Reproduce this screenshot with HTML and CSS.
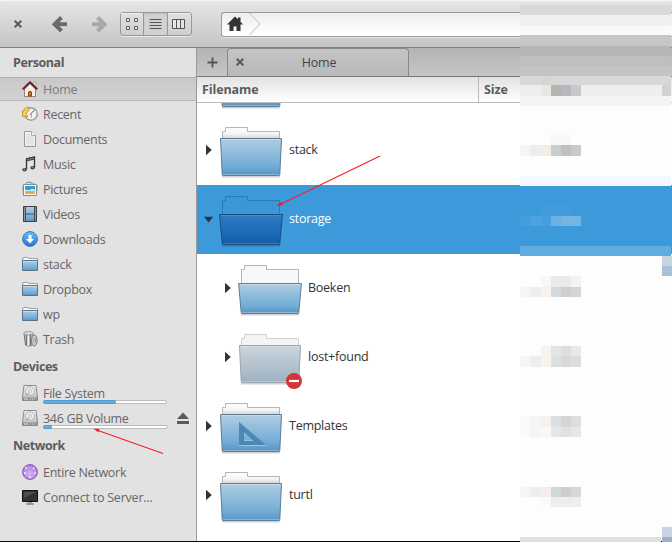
FILE: index.html
```html
<!DOCTYPE html>
<html lang="en">
<head>
<meta charset="utf-8">
<title>Home</title>
<link rel="stylesheet" href="styles.css">
</head>
<body>
<svg class="defs" width="0" height="0" aria-hidden="true">
  <defs>
    <linearGradient id="blue" x1="0" y1="0" x2="0" y2="1"><stop offset="0" stop-color="#b0cde3"/><stop offset=".75" stop-color="#72acd6"/><stop offset="1" stop-color="#5794c2"/></linearGradient>
    <linearGradient id="deep" x1="0" y1="0" x2="0" y2="1"><stop offset="0" stop-color="#2c7dc0"/><stop offset=".7" stop-color="#1b66b5"/><stop offset="1" stop-color="#165ba4"/></linearGradient>
    <linearGradient id="pale" x1="0" y1="0" x2="0" y2="1"><stop offset="0" stop-color="#ccd5dc"/><stop offset=".75" stop-color="#a9bbc9"/><stop offset="1" stop-color="#9bafbe"/></linearGradient>
    <linearGradient id="paper" x1="0" y1="0" x2="0" y2="1"><stop offset="0" stop-color="#fdfdfd"/><stop offset=".6" stop-color="#f5f5f5"/><stop offset="1" stop-color="#d8d8d8"/></linearGradient>
    <linearGradient id="metal" x1="0" y1="0" x2="0" y2="1"><stop offset="0" stop-color="#f3f3f3"/><stop offset="1" stop-color="#b5b5b5"/></linearGradient>
    <linearGradient id="dl" x1="0" y1="0" x2="0" y2="1"><stop offset="0" stop-color="#6cc0f3"/><stop offset="1" stop-color="#2b6fd0"/></linearGradient>
    <radialGradient id="globe" cx=".5" cy=".6" r=".6"><stop offset="0" stop-color="#d3b0f4"/><stop offset="1" stop-color="#9d6cd3"/></radialGradient>
    <symbol id="closed" viewBox="0 0 64 69">
      <path class="shade" d="M3 60.5h58"/>
      <path d="M3.5 22V15.5H6.5V11.5H28.5V15.5H60.5V22" fill="url(#paper)" stroke="#b5b5b5"/>
      <path d="M1.5 22.5H62.5L60.8 58.5Q60.8 59.5 60 59.5H4Q3.2 59.5 3.2 58.5Z" fill="url(#blue)" stroke="#5b7d97"/>
      <path d="M2.5 23.5H61.5M4 58.5H60" stroke="#fff" stroke-opacity=".3" fill="none"/>
    </symbol>
    <symbol id="open" viewBox="0 0 64 69">
      <path class="shade" d="M3 60.5h58"/>
      <path d="M3.5 30V15.5H6.5V11.5H28.5V15.5H60.5V30" fill="#f8f8f8" stroke="#b5b5b5"/>
      <path d="M.6 29.5H63.4L60.8 58.5Q60.8 59.5 60 59.5H4Q3.2 59.5 3.2 58.5Z" fill="url(#blue)" stroke="#5b7d97"/>
      <path d="M2 30.5H62M4 58.5H60" stroke="#fff" stroke-opacity=".3" fill="none"/>
    </symbol>
    <symbol id="smallfolder" viewBox="0 0 16 16">
      <path d="M.5 5V2.5H1.5V1.5H6.5V2.5H15.5V5" fill="#fafafa" stroke="#a2a2a2"/>
      <path d="M.5 4.5H15.5V14.5H.5Z" fill="url(#blue)" stroke="#58738a"/>
      <path d="M1 5.5H15" stroke="#d3e5f2" stroke-opacity=".7"/>
    </symbol>
    <symbol id="disk" viewBox="0 0 16 16">
      <path d="M2 .5H14L15.5 12V15.5H.5V12Z" fill="url(#metal)" stroke="#8b8b8b"/>
      <path d="M1 12.5H15V15H1Z" fill="#8d8d8d"/>
      <path d="M2 14H6M8 14H9M10 14H11M12 14H13" stroke="#e4e4e4"/>
      <ellipse cx="8" cy="6" rx="4.7" ry="4.2" fill="#e8e8e8" stroke="#b4b4b4"/>
      <circle cx="8" cy="6" r="1.4" fill="#fff" stroke="#aaa" stroke-width=".7"/><path d="M4 10.5L7 8" stroke="#999"/>
    </symbol>
    <symbol id="right" viewBox="0 0 10 12"><path d="M2 .7V11.3L7.8 6Z" fill="#333"/></symbol>
    <symbol id="down" viewBox="0 0 10 12"><path d="M0 3.7H9.2L4.6 9.5Z" fill="#333"/></symbol>
    <symbol id="cross" viewBox="0 0 8 8"><path d="M.7 .7L7.3 7.3M7.3 .7L.7 7.3" stroke="#5c5c5c" stroke-width="2.1" fill="none"/></symbol>
  </defs>
</svg>
<div class="window">
  <header class="toolbar">
    <svg class="close" width="8" height="8"><use href="#cross"/></svg>
    <svg class="back" width="16" height="17" viewBox="0 0 16 17"><path d="M9.5 1.5L2.5 8.3L9.5 15M3 8.3H15" stroke="#fff" stroke-opacity=".4" stroke-width="4" fill="none" transform="translate(0 1)"/><path d="M9.5 1.5L2.5 8.3L9.5 15M3 8.3H15" stroke="#6b6b6b" stroke-width="4" fill="none"/></svg>
    <svg class="forward" width="16" height="17" viewBox="0 0 16 17"><path d="M6.5 1.5L13.5 8.3L6.5 15M13 8.3H1" stroke="#a8a8a8" stroke-width="4" fill="none"/></svg>
    <div class="views">
      <span class="view"><svg width="14" height="14" viewBox="0 0 14 14"><path d="M1.5 1.5h3v3h-3zM9.5 1.5h3v3h-3zM1.5 9.5h3v3h-3zM9.5 9.5h3v3h-3z" fill="#eee" stroke="#5b5b5b"/></svg></span>
      <span class="view view-on"><svg width="13" height="12" viewBox="0 0 13 12"><path d="M.5 1.5H12.5M.5 4.5H12.5M.5 7.5H12.5M.5 10.5H12.5" stroke="#555"/></svg></span>
      <span class="view"><svg width="14" height="12" viewBox="0 0 14 12"><path d="M.5 1.5H12.5V10.5H.5ZM4.5 1V11M8.5 1V11" fill="#e5e5e5" stroke="#555"/></svg></span>
    </div>
    <div class="pathbar">
      <svg width="16" height="16" viewBox="0 0 16 16"><path d="M8 .5L0 8.5H2.5V15H6.5V10.5H9.5V15H13.5V8.5H16L13.5 5.8V1.5H11V3.3Z" fill="#333"/></svg>
      <svg class="chevron" width="12" height="22" viewBox="0 0 12 22"><path d="M.5 0L11 11L.5 22" fill="none" stroke="#bcbcbc"/></svg>
    </div>
  </header>
  <div class="body">
    <nav class="sidebar">
      <h2>Personal</h2>
      <div class="place current"><svg class="ico" viewBox="0 0 16 16"><path d="M11.5 1H14V5H11.5Z" fill="#f3d9c4" stroke="#b99b86" stroke-width=".7"/><path d="M2.5 8L8 2.5L13.5 8V15.5H2.5Z" fill="#f7eee8" stroke="#a08070"/><path d="M.8 8.2L8 1.3L15.2 8.2" fill="none" stroke="#6b1f22" stroke-width="2"/><path d="M6.5 15V11Q8 9.5 9.5 11V15Z" fill="#c87830" stroke="#7f4313"/></svg><span>Home</span></div>
      <div class="place"><svg class="ico" viewBox="0 0 16 16"><circle cx="9" cy="8" r="6.2" fill="#f3f3f1" stroke="#8e8e8a" stroke-width="1.2"/><path d="M9 7.5L12.5 4M9 7.5V9" stroke="#555"/><path d="M8.5 8L10 12" stroke="#ef7965"/><path d="M6.5 1Q2 1.5 2 5L.5 4.5V10.5H6L4.5 8.5Q4 5.5 7 4.5Z" fill="#f3cf58" stroke="#bb943c" stroke-width=".9"/></svg><span>Recent</span></div>
      <div class="place"><svg class="ico" viewBox="0 0 16 16"><path d="M2.5 .5H9.5L13.5 4.5V15.5H2.5Z" fill="url(#metal)" stroke="#999"/><path d="M3.5 1.5H9V5H12.5V14.5H3.5Z" fill="#e4e4e4" stroke="#fff" stroke-opacity=".7"/><path d="M9.5 .5V4.5H13.5" fill="#fff" stroke="#aaa"/></svg><span>Documents</span></div>
      <div class="place"><svg class="ico" viewBox="0 0 16 16"><path d="M4.5 13.5V3L12.5 1V11.5" fill="none" stroke="#333" stroke-width="1.3"/><path d="M4 2.3L13 .3V3.5L4 5.5Z" fill="#3c3c3c"/><path d="M5 3.8L12 2.2" stroke="#aaa" stroke-width=".6"/><ellipse cx="2.6" cy="13.8" rx="2.3" ry="1.8" fill="#444"/><ellipse cx="10.6" cy="11.8" rx="2.3" ry="1.8" fill="#444"/><circle cx="2.4" cy="13.6" r=".7" fill="#aaa"/><circle cx="10.4" cy="11.6" r=".7" fill="#aaa"/></svg><span>Music</span></div>
      <div class="place"><svg class="ico" viewBox="0 0 16 16"><path d="M3 3L7 .7L14 3.5L15.5 5L14.5 12L1.5 14L.5 6Z" fill="#ddd" stroke="#999" stroke-width=".8"/><path d="M4 2L7 1L10 3" fill="none" stroke="#65b1ce"/><path d="M1.5 3.5H14.5V14.5H1.5Z" fill="#fff" stroke="#8a8a8a"/><path d="M3 5H13V9H3Z" fill="#279fd9"/><path d="M3 9H13V13H3Z" fill="#e8aa49"/><path d="M3 8.5L7 9.2L10 7.8L13 8.5V10H3Z" fill="#c9edf5"/></svg><span>Pictures</span></div>
      <div class="place"><svg class="ico" viewBox="0 0 16 16"><path d="M1.5 .5H14.5V15.5H1.5Z" fill="#444b50" stroke="#3c4246"/><path d="M4 1H12V7.5H4ZM4 8.5H12V15H4Z" fill="url(#blue)"/><path d="M2.5 1.5V15M13.5 1.5V15" stroke="#e8e8e8" stroke-width="1" stroke-dasharray="1 1"/></svg><span>Videos</span></div>
      <div class="place"><svg class="ico" viewBox="0 0 16 16"><circle cx="8" cy="8" r="7.4" fill="url(#dl)" stroke="#3579bc"/><path d="M6.5 4H9.5V8H12L8 12.5L4 8H6.5Z" fill="#fff"/></svg><span>Downloads</span></div>
      <div class="place"><svg class="ico"><use href="#smallfolder"/></svg><span>stack</span></div>
      <div class="place"><svg class="ico"><use href="#smallfolder"/></svg><span>Dropbox</span></div>
      <div class="place"><svg class="ico"><use href="#smallfolder"/></svg><span>wp</span></div>
      <div class="place"><svg class="ico" viewBox="0 0 16 16"><path d="M2 2.5H11L10.3 14Q7 16.3 3.5 14Z" fill="#b8b8b8" stroke="#777"/><path d="M4.5 4V14M8.5 4V14.5" stroke="#777"/><path d="M6.3 4V15" stroke="#f4f4f4" stroke-width="1.4"/><ellipse cx="6.5" cy="2.3" rx="4.7" ry="1.7" fill="#ddd" stroke="#8b8b8b" stroke-width=".8"/><ellipse cx="12.3" cy="9.5" rx="2.8" ry="5.5" fill="#ccc" stroke="#777"/><ellipse cx="12.7" cy="9.3" rx="1" ry="2" fill="#eee" stroke="#777" stroke-width=".8"/></svg><span>Trash</span></div>
      <h2 class="devices">Devices</h2>
      <div class="place device"><svg class="ico"><use href="#disk"/></svg><div class="volume"><span>File System</span><div class="meter"><i style="width:60%"></i></div></div></div>
      <div class="place device"><svg class="ico"><use href="#disk"/></svg><div class="volume wide"><span>346 GB Volume</span><div class="meter"><i style="width:7%"></i></div></div><svg class="eject" width="12" height="13" viewBox="0 0 12 13"><path d="M6 .5L12 7H0ZM0 9H12V12H0Z" fill="#5a5a5a"/></svg></div>
      <h2 class="network">Network</h2>
      <div class="place"><svg class="ico" viewBox="0 0 16 16"><circle cx="8" cy="8" r="7.5" fill="url(#globe)" stroke="#9068bb"/><path d="M4 3L12 4L14 9L9 14L3 10ZM4 3L8 8L12 4M3 10L13 9" fill="none" stroke="#e0c8fa" stroke-width=".5"/><g fill="#fff"><circle cx="4" cy="4" r=".8"/><circle cx="12" cy="4" r=".8"/><circle cx="3" cy="9" r=".9"/><circle cx="13" cy="9" r=".8"/><circle cx="8" cy="13" r=".9"/></g></svg><span>Entire Network</span></div>
      <div class="place connect"><svg class="ico" viewBox="0 0 16 16"><path d="M.5 1.5H15.5V12.5H.5Z" fill="#343039" stroke="#111"/><path d="M2 3H14L2 9Z" fill="#514b57"/><path d="M6 13H10V14H6Z" fill="#999"/><path d="M4.5 14.5H11.5V15.5H4.5Z" fill="#fff" stroke="#777" stroke-width=".7"/></svg><span>Connect to Server...</span></div>
    </nav>
    <main class="content">
      <div class="tabs">
        <div class="newtab"><svg width="11" height="11" viewBox="0 0 11 11"><path d="M5.5 .5V10.5M.5 5.5H10.5" stroke="#555" stroke-width="1.8"/></svg></div>
        <div class="tab"><svg width="8" height="8"><use href="#cross"/></svg><span>Home</span></div>
      </div>
      <div class="columns"><span class="name">Filename</span><span class="size">Size</span></div>
      <div class="files">
        <div class="file partial"><svg class="folder"><use href="#closed"/></svg></div>
        <div class="file"><svg class="arrow"><use href="#right"/></svg><svg class="folder"><use href="#closed"/></svg><span>stack</span></div>
        <div class="file selected"><svg class="arrow"><use href="#down"/></svg><svg class="folder" viewBox="0 0 64 69"><path class="shade" d="M3 60.5h58"/><path d="M3.5 29V15.5H6.5V11.5H28.5V15.5H60.5V29" fill="#3c97d7" stroke="#2b7ab5"/><path d="M.6 29.5H63.4L60.8 58.5Q60.8 59.5 60 59.5H4Q3.2 59.5 3.2 58.5Z" fill="url(#deep)" stroke="#1a4d7f"/><path d="M2 30.5H62M4 58.5H60" stroke="#579ed5" stroke-opacity=".5" fill="none"/></svg><span>storage</span></div>
        <div class="file child"><svg class="arrow"><use href="#right"/></svg><svg class="folder"><use href="#open"/></svg><span>Boeken</span></div>
        <div class="file child"><svg class="arrow"><use href="#right"/></svg><svg class="folder" viewBox="0 0 64 69"><path class="shade" d="M3 60.5h58"/><path d="M3.5 22V15.5H6.5V11.5H28.5V15.5H60.5V22" fill="#f4f4f4" stroke="#d0d0d0"/><path d="M1.5 22.5H62.5L60.8 58.5Q60.8 59.5 60 59.5H4Q3.2 59.5 3.2 58.5Z" fill="url(#pale)" stroke="#9aa5ad"/><path d="M2.5 23.5H61.5M4 58.5H60" stroke="#fff" stroke-opacity=".3"/><circle cx="56" cy="58" r="8" fill="#d33438"/><path d="M51 58H61" stroke="#fff" stroke-width="2.2"/></svg><span>lost+found</span></div>
        <div class="file"><svg class="arrow"><use href="#right"/></svg><svg class="folder" viewBox="0 0 64 69"><use href="#closed" width="64" height="69"/><path d="M20 30V53H47ZM25 40V48.5H34Z" fill="#4e87b1" fill-rule="evenodd"/><path d="M20 53.5H47M25 48.5H34" stroke="#a7cce5" stroke-width=".8"/></svg><span>Templates</span></div>
        <div class="file"><svg class="arrow"><use href="#right"/></svg><svg class="folder"><use href="#closed"/></svg><span>turtl</span></div>
      </div>
    </main>
  </div>
</div>
<svg class="overlay" width="672" height="542" viewBox="0 0 672 542">
  <g shape-rendering="crispEdges">
    <path d="M520 5h151v10h-151z" fill="#d8d8d8"/><path d="M520 15h151v11h-151z" fill="#f0f0f0"/><path d="M520 26h151v9h-151z" fill="#f9f9f9"/>
    <path d="M520 35h151v11h-151z" fill="#c7c7c7"/><path d="M520 46h151v10h-151z" fill="#b5b5b5"/><path d="M520 56h151v10h-151z" fill="#bfbfbf"/><path d="M520 66h151v10h-151z" fill="#c4c4c4"/>
    <path d="M520 76h151v9h-151z" fill="#d8d8d8"/><path d="M520 85h151v11h-151z" fill="#eee"/><path d="M520 96h151v10h-151z" fill="#f4f4f4"/>
    <path d="M520 106h151v70h-151z" fill="#fdfdfd"/><path d="M520 176h151v10h-151z" fill="#f2f8fd"/><path d="M520 186h151v60h-151z" fill="#3c99da"/><path d="M520 246h151v10h-151z" fill="#60acdf"/>
    <path d="M520 256h151v281h-151z" fill="#fdfdfd"/><path d="M520 537h141v5h-141z" fill="#e0e0e0"/>
    <path d="M541 76h10v9h-10z" fill="#d5d5d2"/><path d="M541 85h10v11h-10z" fill="#e8e7e3"/><path d="M551 85h10v11h-10z" fill="#b4b4b0"/><path d="M561 85h10v11h-10z" fill="#b7b9be"/><path d="M571 85h10v11h-10z" fill="#c7c8ca"/><path d="M662 85h9v11h-9z" fill="#d2d2d2"/>
    <path d="M551 135h20v10h-20z" fill="#f8f8f8"/><path d="M520 145h10v11h-10z" fill="#f5f5f5"/><path d="M530 145h11v11h-11z" fill="#ededed"/><path d="M541 145h10v11h-10z" fill="#f3ece7"/><path d="M551 145h10v11h-10z" fill="#cacdcc"/><path d="M561 145h10v11h-10z" fill="#c0c0bf"/><path d="M571 145h10v11h-10z" fill="#c9cacc"/>
    <path d="M541 206h30v10h-30z" fill="#429cdc"/><path d="M520 216h11v10h-11z" fill="#469ddd"/><path d="M531 216h10v10h-10z" fill="#4da2df"/><path d="M541 216h10v10h-10z" fill="#43a0e1"/><path d="M551 216h10v10h-10z" fill="#6cb0e2"/><path d="M561 216h20v10h-20z" fill="#75b5e4"/>
    <path d="M541 276h10v11h-10z" fill="#f9f7f5"/><path d="M551 276h20v11h-20z" fill="#e9ebeb"/><path d="M571 276h10v11h-10z" fill="#f3f3f3"/><path d="M520 287h10v10h-10z" fill="#f5f5f5"/><path d="M530 287h11v10h-11z" fill="#eee"/><path d="M541 287h10v10h-10z" fill="#f8f2ee"/><path d="M551 287h10v10h-10z" fill="#d5d9d9"/><path d="M561 287h10v10h-10z" fill="#cecfcd"/><path d="M571 287h10v10h-10z" fill="#d3d4d8"/>
    <path d="M541 346h10v21h-10z" fill="#f9f3f0"/><path d="M551 346h10v10h-10z" fill="#e2e4e6"/><path d="M561 346h10v10h-10z" fill="#dddee2"/><path d="M571 346h10v10h-10z" fill="#e9e9e9"/><path d="M520 356h10v11h-10z" fill="#f6f6f6"/><path d="M530 356h11v11h-11z" fill="#eee"/><path d="M551 356h10v11h-10z" fill="#dde0df"/><path d="M561 356h10v11h-10z" fill="#d8d8d8"/><path d="M571 356h10v11h-10z" fill="#dcdde0"/>
    <path d="M520 416h10v21h-10z" fill="#fafafa"/><path d="M530 416h11v21h-11z" fill="#f5f5f7"/><path d="M541 416h10v11h-10z" fill="#f7f1ee"/><path d="M551 416h10v11h-10z" fill="#dcdee0"/><path d="M561 416h10v11h-10z" fill="#d5d5d5"/><path d="M571 416h10v11h-10z" fill="#dedee0"/><path d="M541 427h10v10h-10z" fill="#f9f8f5"/><path d="M551 427h10v10h-10z" fill="#e4e7e5"/><path d="M561 427h10v10h-10z" fill="#e1e1e2"/><path d="M571 427h10v10h-10z" fill="#e5e7ea"/>
    <path d="M520 487h10v10h-10z" fill="#f5f5f5"/><path d="M530 487h11v10h-11z" fill="#ededee"/><path d="M541 487h10v10h-10z" fill="#f5eeeb"/><path d="M551 487h10v10h-10z" fill="#d1d6d6"/><path d="M561 487h10v10h-10z" fill="#cccfcd"/><path d="M571 487h10v10h-10z" fill="#d6d7da"/><path d="M541 497h10v10h-10z" fill="#fafaf8"/><path d="M551 497h20v10h-20z" fill="#ebeeed"/><path d="M571 497h10v10h-10z" fill="#eee"/>
    <path d="M662 256h10v10h-10zM662 527h10v10h-10z" fill="#c9d3df"/><path d="M662 266h10v10h-10z" fill="#aac0d9"/><path d="M662 537h10v5h-10z" fill="#9bb1cf"/>
  </g>
  <path d="M380 156L282 203.5M163 453.5L98 430.5" stroke="#f51f25" stroke-width="1.1"/>
  <path d="M276.5 206L281 201.8L282.8 205ZM93.5 428.7L99.5 429L98.3 432.3Z" fill="#ed1c24"/>
</svg>
</body>
</html>
```
FILE: styles.css
```css
* { box-sizing: border-box; }
body { margin: 0; font: 12.5px/18px "Open Sans", "Noto Sans", sans-serif; letter-spacing: -.25px; color: #333; overflow: hidden; }
svg { display: block; flex: none; }
.defs { position: absolute; }
.window { width: 672px; height: 542px; display: flex; flex-direction: column; border-bottom: 1px solid #080808; background: #fff; }
.toolbar { height: 48px; flex: none; display: flex; align-items: center; padding-left: 14px; background: linear-gradient(#e6e6e6, #c5c5c5); border-top: 1px solid #f5f5f5; border-bottom: 1px solid #828282; border-top-left-radius: 2px; }
.back { margin-left: 30px; }
.forward { margin-left: 23px; }
.views { display: flex; width: 72px; height: 24px; margin-left: 13px; border: 1px solid #999; border-radius: 3px; background: linear-gradient(#e1e1e1, #cecece); box-shadow: 0 1px #e8e8e8; }
.view { width: 22px; flex: none; display: flex; align-items: center; justify-content: center; box-shadow: inset 0 1px #eee; }
.view-on { width: 25px; background: #d2d2d2; border: solid #999; border-width: 0 1px; box-shadow: inset 0 1px 2px #bbb; }
.pathbar { flex: 1; height: 25px; margin-left: 29px; padding-left: 5px; display: flex; align-items: center; border: 1px solid #999; border-right: 0; border-radius: 3px 0 0 3px; background: linear-gradient(#eee, #fff); box-shadow: 0 1px #e4e4e4; }
.chevron { margin-left: 6px; }
.body { flex: 1; min-height: 0; display: flex; }
.sidebar { width: 197px; flex: none; background: #e2e2e2; border-right: 1px solid #999; color: #666; }
h2 { margin: 0; height: 29px; padding-left: 13px; font-size: 12.5px; line-height: 29px; font-weight: 700; letter-spacing: -.42px; color: #5c5c5c; }
.place { height: 25px; padding: 4px 0 0 22px; display: flex; gap: 5px; letter-spacing: -.3px; }
.connect { letter-spacing: -.22px; }
.place > span { line-height: 17px; }
.current { height: 24px; margin-bottom: 1px; padding-top: 3px; border-top: 1px solid #b0b0b0; border-bottom: 1px solid #b8b8b8; background: linear-gradient(#c9c9c9, #d1d1d1); color: #7c7c7c; }
.ico { width: 16px; height: 16px; }
.volume { width: 124px; display: flex; flex-direction: column; }
.volume > span { height: 15px; line-height: 17px; }
.wide { width: 125px; }
.meter { height: 4px; border: 1px solid #bcbcbc; border-radius: 2px; background: #fff; }
.meter i { display: block; height: 4px; margin: -1px; border-radius: 2px; background: #62aee3; border: 1px solid #5399cb; }
.eject { margin: 2px 0 0 4px; }
.content { flex: 1; min-width: 0; display: flex; flex-direction: column; }
.tabs { height: 29px; flex: none; display: flex; background: linear-gradient(#b4b4b4, #c5c5c5); border-bottom: 1px solid #777; }
.newtab { width: 30px; display: flex; align-items: center; justify-content: center; }
.tab { width: 182px; padding: 0 0 1px 8px; display: flex; align-items: center; border: 1px solid #888; border-bottom: 0; border-radius: 4px 4px 0 0; background: linear-gradient(#c4c4c4, #b9b9b9); }
.tab span { flex: 1; padding: 1px 14px 0 0; text-align: center; color: #444; }
.columns { height: 26px; flex: none; display: flex; line-height: 25px; font-weight: 700; letter-spacing: -.1px; color: #5c5c5c; background: linear-gradient(#e2e2e2, #fff); border-bottom: 1px solid #bcbcbc; }
.name { width: 282px; padding-left: 5px; border-right: 1px solid #bcbcbc; }
.size { padding-left: 5px; }
.files { flex: 1; min-height: 0; display: flex; flex-direction: column; overflow: hidden; }
.file { height: 69px; flex: none; display: flex; align-items: center; padding-left: 7px; }
.file > span { margin: -2px 0 0 6px; }
.partial { height: 13px; align-items: flex-end; padding: 0 0 0 22px; overflow: hidden; }
.child { padding-left: 26px; }
.selected { background: #3c99da; color: #fff; }
.arrow { width: 10px; height: 12px; margin-top: -1px; }
.folder { width: 64px; height: 69px; margin-left: 5px; }
.partial .folder { margin-left: 0; }
.shade { fill: none; stroke: #000; stroke-opacity: .18; stroke-width: 2; }
.overlay { position: absolute; top: 0; left: 0; pointer-events: none; }
```
